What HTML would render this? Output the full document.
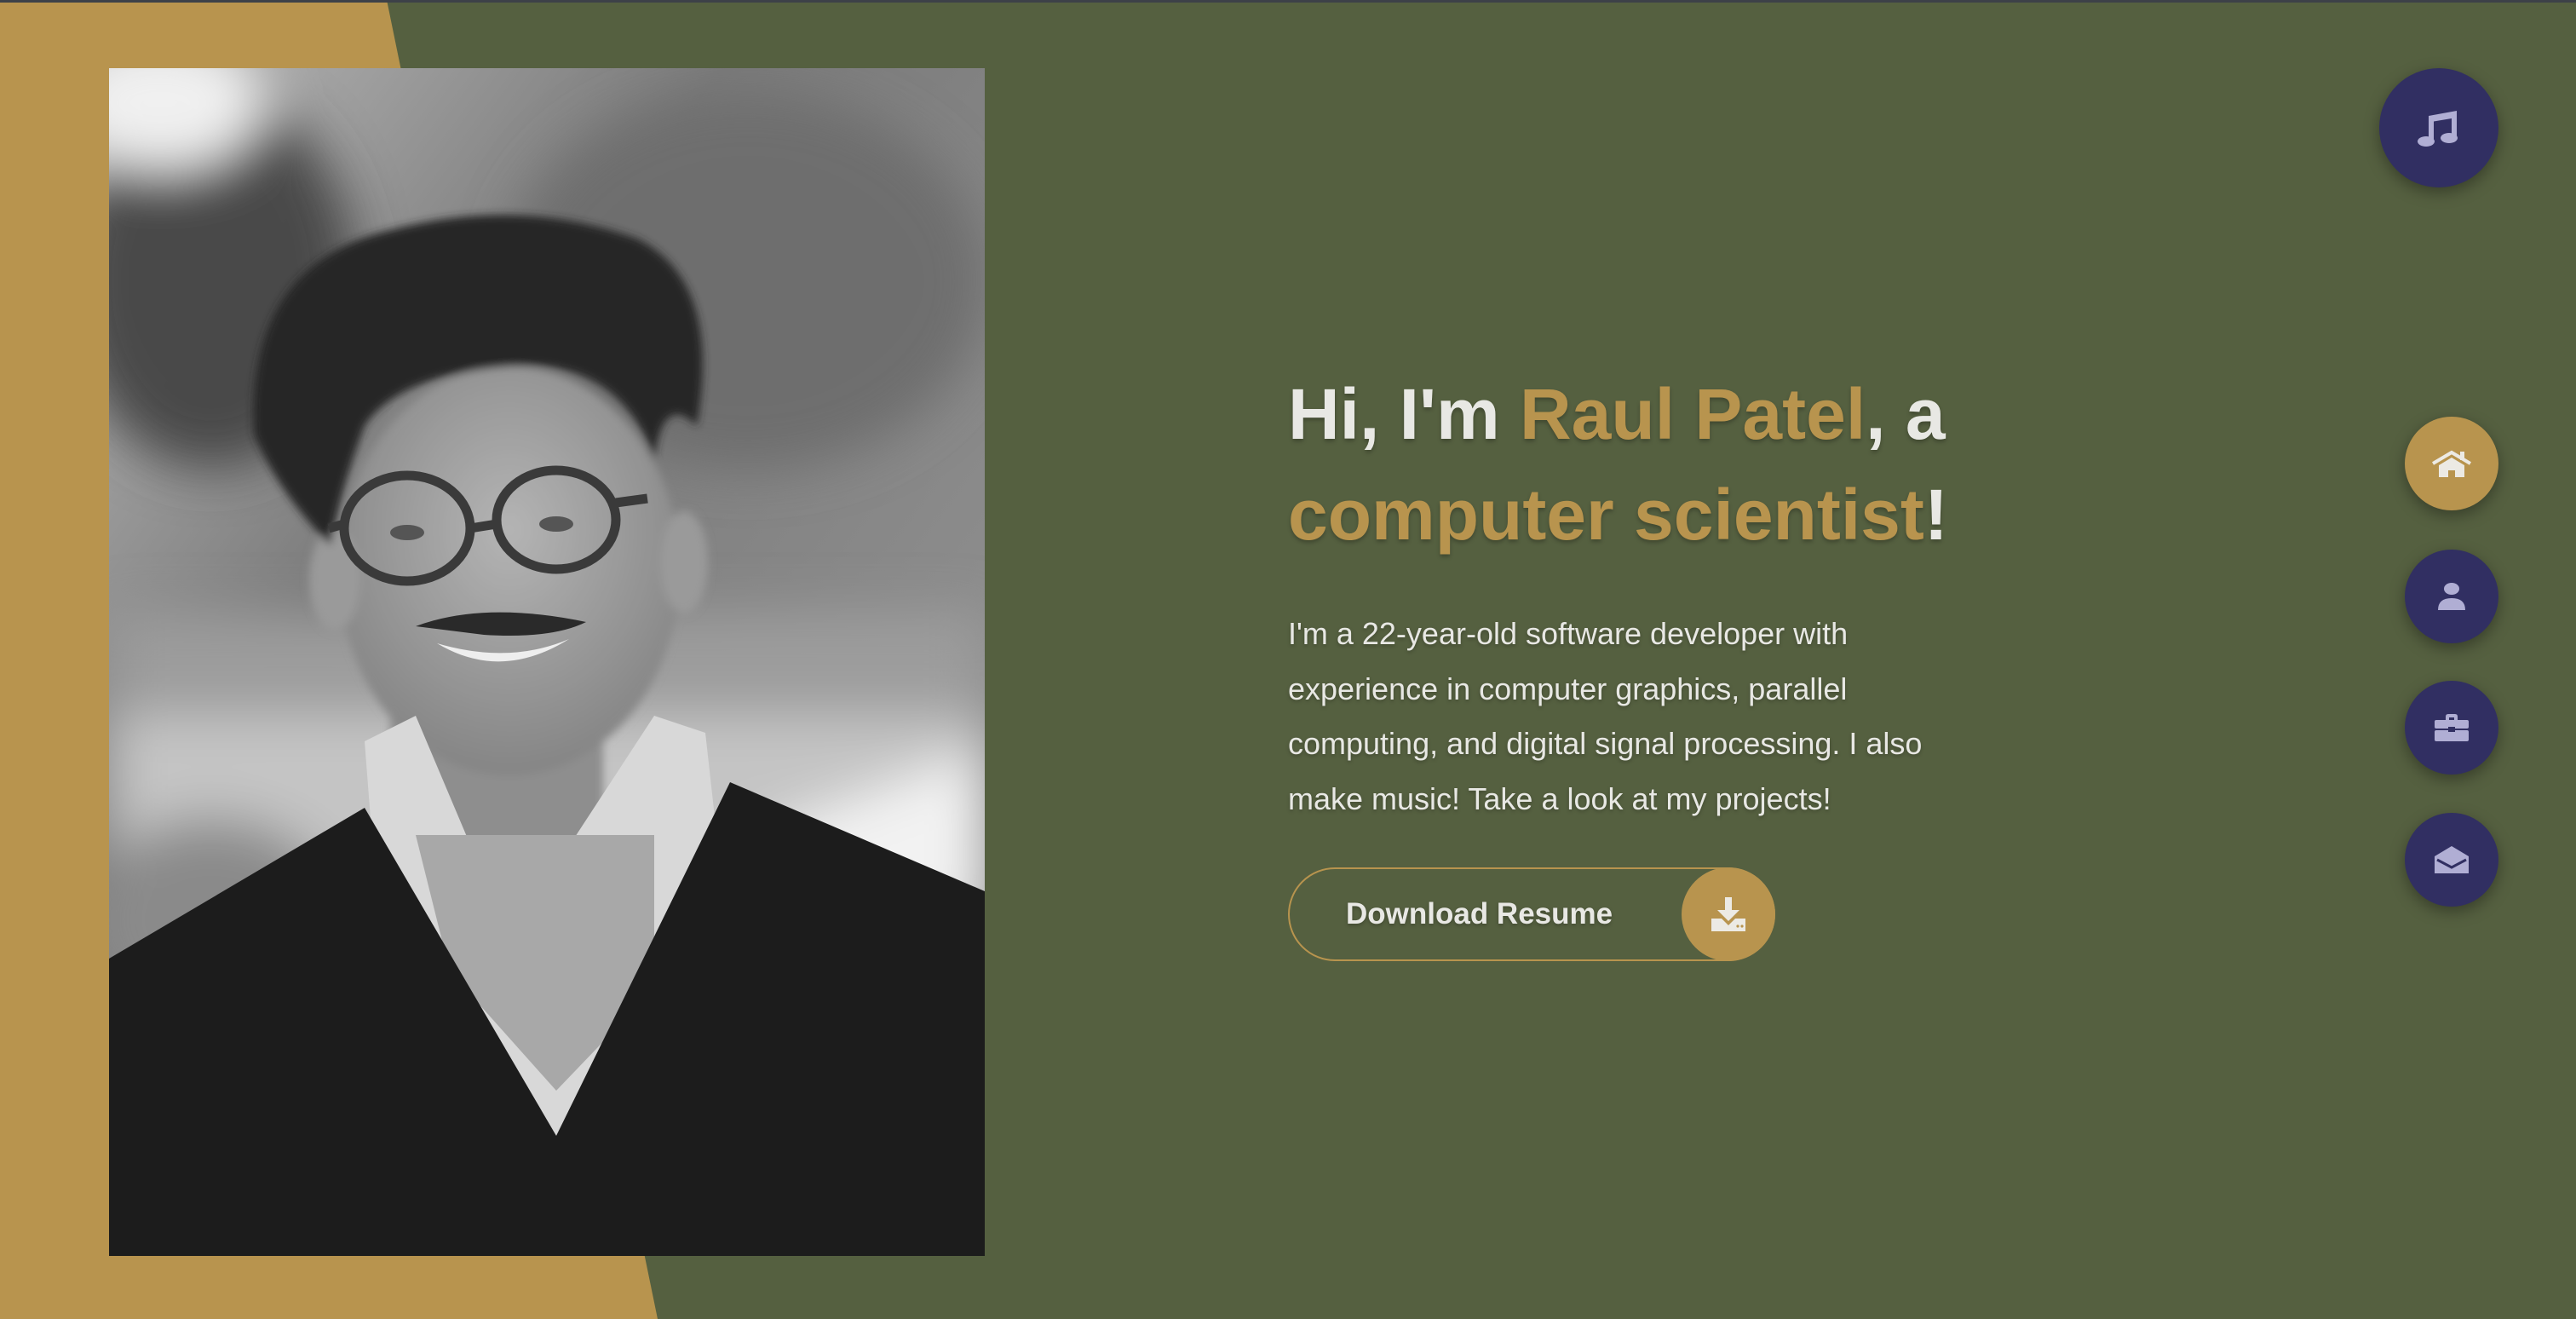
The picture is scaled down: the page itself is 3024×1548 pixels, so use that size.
<!DOCTYPE html>
<html><head><meta charset="utf-8"><style>
html,body{margin:0;padding:0;}
body{width:3024px;height:1548px;position:relative;overflow:hidden;background:#556040;font-family:"Liberation Sans",sans-serif;}
.topline{position:absolute;left:0;top:0;width:3024px;height:3px;background:#3d4148;}
.gold{position:absolute;left:0;top:0;width:3024px;height:1548px;}
.photo{position:absolute;left:128px;top:80px;width:1028px;height:1394px;}
.h{position:absolute;left:1512px;font-weight:bold;font-size:84px;line-height:118px;color:#e8e8e4;white-space:nowrap;text-shadow:0 3px 5px rgba(0,0,0,.25);}
.g{color:#b8944e;}
.p{position:absolute;left:1512px;top:712px;font-size:36px;line-height:64.5px;color:#e8e8e4;white-space:nowrap;text-shadow:0 2px 4px rgba(0,0,0,.25);}
.btn{position:absolute;left:1512px;top:1018px;width:568px;height:106px;border:2px solid #b8944e;border-radius:60px;box-sizing:content-box;}
.btn .t{position:absolute;left:66px;top:0;height:106px;line-height:106px;font-weight:bold;font-size:35px;color:#e8e8e4;text-shadow:0 2px 4px rgba(0,0,0,.25);}
.btn .c{position:absolute;right:-2px;top:-2px;width:110px;height:110px;border-radius:50%;background:#b8944e;display:flex;align-items:center;justify-content:center;}
.circ{position:absolute;border-radius:50%;background:#312f62;display:flex;align-items:center;justify-content:center;box-shadow:0 6px 18px rgba(0,0,0,.35);}
</style></head><body>
<svg class="gold" viewBox="0 0 3024 1548"><polygon points="0,0 454,0 772,1548 0,1548" fill="#b8944e"/></svg>
<div class="topline"></div>

<svg class="photo" viewBox="0 0 1028 1394" preserveAspectRatio="none">
<defs>
<linearGradient id="bg" x1="0" y1="0" x2="1" y2="1"><stop offset="0" stop-color="#b9b9b9"/><stop offset=".35" stop-color="#7a7a7a"/><stop offset="1" stop-color="#9a9a9a"/></linearGradient>
<radialGradient id="face" cx=".5" cy=".4" r=".6"><stop offset="0" stop-color="#b4b4b4"/><stop offset="1" stop-color="#858585"/></radialGradient>
<filter id="bl"><feGaussianBlur stdDeviation="30"/></filter>
<filter id="bl2"><feGaussianBlur stdDeviation="5"/></filter>
</defs>
<rect width="1028" height="1394" fill="url(#bg)"/>
<g filter="url(#bl)">
<ellipse cx="120" cy="250" rx="170" ry="220" fill="#4a4a4a"/>
<ellipse cx="750" cy="250" rx="280" ry="220" fill="#6e6e6e"/>
<ellipse cx="60" cy="40" rx="120" ry="80" fill="#f0f0f0"/>
<rect x="0" y="640" width="1028" height="120" fill="#9c9c9c"/>
<rect x="0" y="760" width="1028" height="300" fill="#c4c4c4"/>
<polygon points="760,900 1028,800 1028,1000 800,1000" fill="#f2f2f2"/>
<ellipse cx="120" cy="1000" rx="150" ry="120" fill="#8a8a8a"/>
</g>
<g filter="url(#bl2)">
<rect x="330" y="700" width="250" height="260" fill="#8e8e8e"/>
<ellipse cx="470" cy="590" rx="200" ry="240" fill="url(#face)"/>
<ellipse cx="265" cy="600" rx="30" ry="60" fill="#9a9a9a"/>
<ellipse cx="675" cy="580" rx="28" ry="60" fill="#9a9a9a"/>
<path d="M170 430 Q160 230 330 190 Q480 150 620 200 Q720 250 690 420 Q650 380 640 460 Q600 340 470 350 Q340 360 300 420 Q270 500 260 560 Q200 500 170 430 Z" fill="#262626"/>
</g>
<g fill="none" stroke="#3a3a3a" stroke-width="11">
<ellipse cx="350" cy="540" rx="74" ry="62"/><ellipse cx="525" cy="530" rx="70" ry="58"/>
<path d="M424 540 L455 535 M276 535 L258 540 M595 510 L632 505"/>
</g>
<ellipse cx="350" cy="545" rx="20" ry="9" fill="#555"/><ellipse cx="525" cy="535" rx="20" ry="9" fill="#555"/>
<path d="M360 655 Q440 625 560 650 Q520 670 440 665 Z" fill="#2a2a2a"/>
<path d="M385 675 Q460 720 540 670 Q470 700 385 675 Z" fill="#eee"/>
<polygon points="300,790 360,760 470,1020 640,760 700,780 729,1040 525,1253 320,1050" fill="#d8d8d8"/>
<polygon points="360,900 640,900 640,1080 525,1200 400,1060" fill="#a8a8a8"/>
<polygon points="0,1045 300,868 525,1253 729,838 1028,966 1028,1394 0,1394" fill="#1c1c1c"/>
</svg>

<div class="h" style="top:427px">Hi, I'm <span class="g">Raul Patel</span>, a</div>
<div class="h" style="top:545px"><span class="g">computer scientist</span>!</div>
<div class="p">I'm a 22-year-old software developer with<br>experience in computer graphics, parallel<br>computing, and digital signal processing. I also<br>make music! Take a look at my projects!</div>

<div class="btn"><div class="t">Download Resume</div>
<div class="c"><svg width="44" height="44" viewBox="0 0 44 44" fill="#eceae4">
<rect x="18" y="2" width="8" height="16"/><polygon points="9,17 35,17 22,30"/>
<path d="M2 27 H14 L22 35 L30 27 H42 V42 H2 Z"/><circle cx="33" cy="36" r="1.6" fill="#b8944e"/><circle cx="38" cy="36" r="1.6" fill="#b8944e"/>
</svg></div></div>

<div class="circ" style="left:2793px;top:80px;width:140px;height:140px;">
<svg width="50" height="46" viewBox="0 0 50 46" fill="#b0aed4"><path d="M13 9 L46 3 V36 H40 V12 L19 15.5 V40 H13 Z"/><ellipse cx="10" cy="39" rx="10" ry="6"/><ellipse cx="37" cy="35" rx="10" ry="6"/></svg></div>

<div class="circ" style="left:2823px;top:489px;width:110px;height:110px;background:#b8944e;">
<svg width="46" height="36" viewBox="0 0 46 36"><path d="M1 18 L23 5 L45 18" fill="none" stroke="#eceae4" stroke-width="4"/><rect x="33" y="4" width="5" height="10" fill="#eceae4"/><path d="M8 20 L23 11 L38 20 V34 H27 V26 H19 V34 H8 Z" fill="#eceae4"/></svg></div>

<div class="circ" style="left:2823px;top:645px;width:110px;height:110px;">
<svg width="36" height="36" viewBox="0 0 36 36" fill="#b0aed4"><ellipse cx="18" cy="9" rx="9" ry="7"/><path d="M2 34 Q2 20 18 20 Q34 20 34 34 Z"/></svg></div>

<div class="circ" style="left:2823px;top:799px;width:110px;height:110px;">
<svg width="40" height="34" viewBox="0 0 40 34" fill="#b0aed4"><path d="M13 8 V4 Q13 1 16 1 H24 Q27 1 27 4 V8 H23 V5 H17 V8 Z"/><rect x="0" y="8" width="40" height="10" rx="2"/><rect x="0" y="20" width="40" height="13" rx="2"/><rect x="16" y="16" width="8" height="6" fill="#312f62"/></svg></div>

<div class="circ" style="left:2823px;top:954px;width:110px;height:110px;">
<svg width="40" height="36" viewBox="0 0 40 36"><path d="M0 14 L20 2 L40 14 V34 H0 Z" fill="#b0aed4"/><path d="M3 18 L20 27 L37 18" fill="none" stroke="#312f62" stroke-width="3"/></svg></div>
</body></html>
